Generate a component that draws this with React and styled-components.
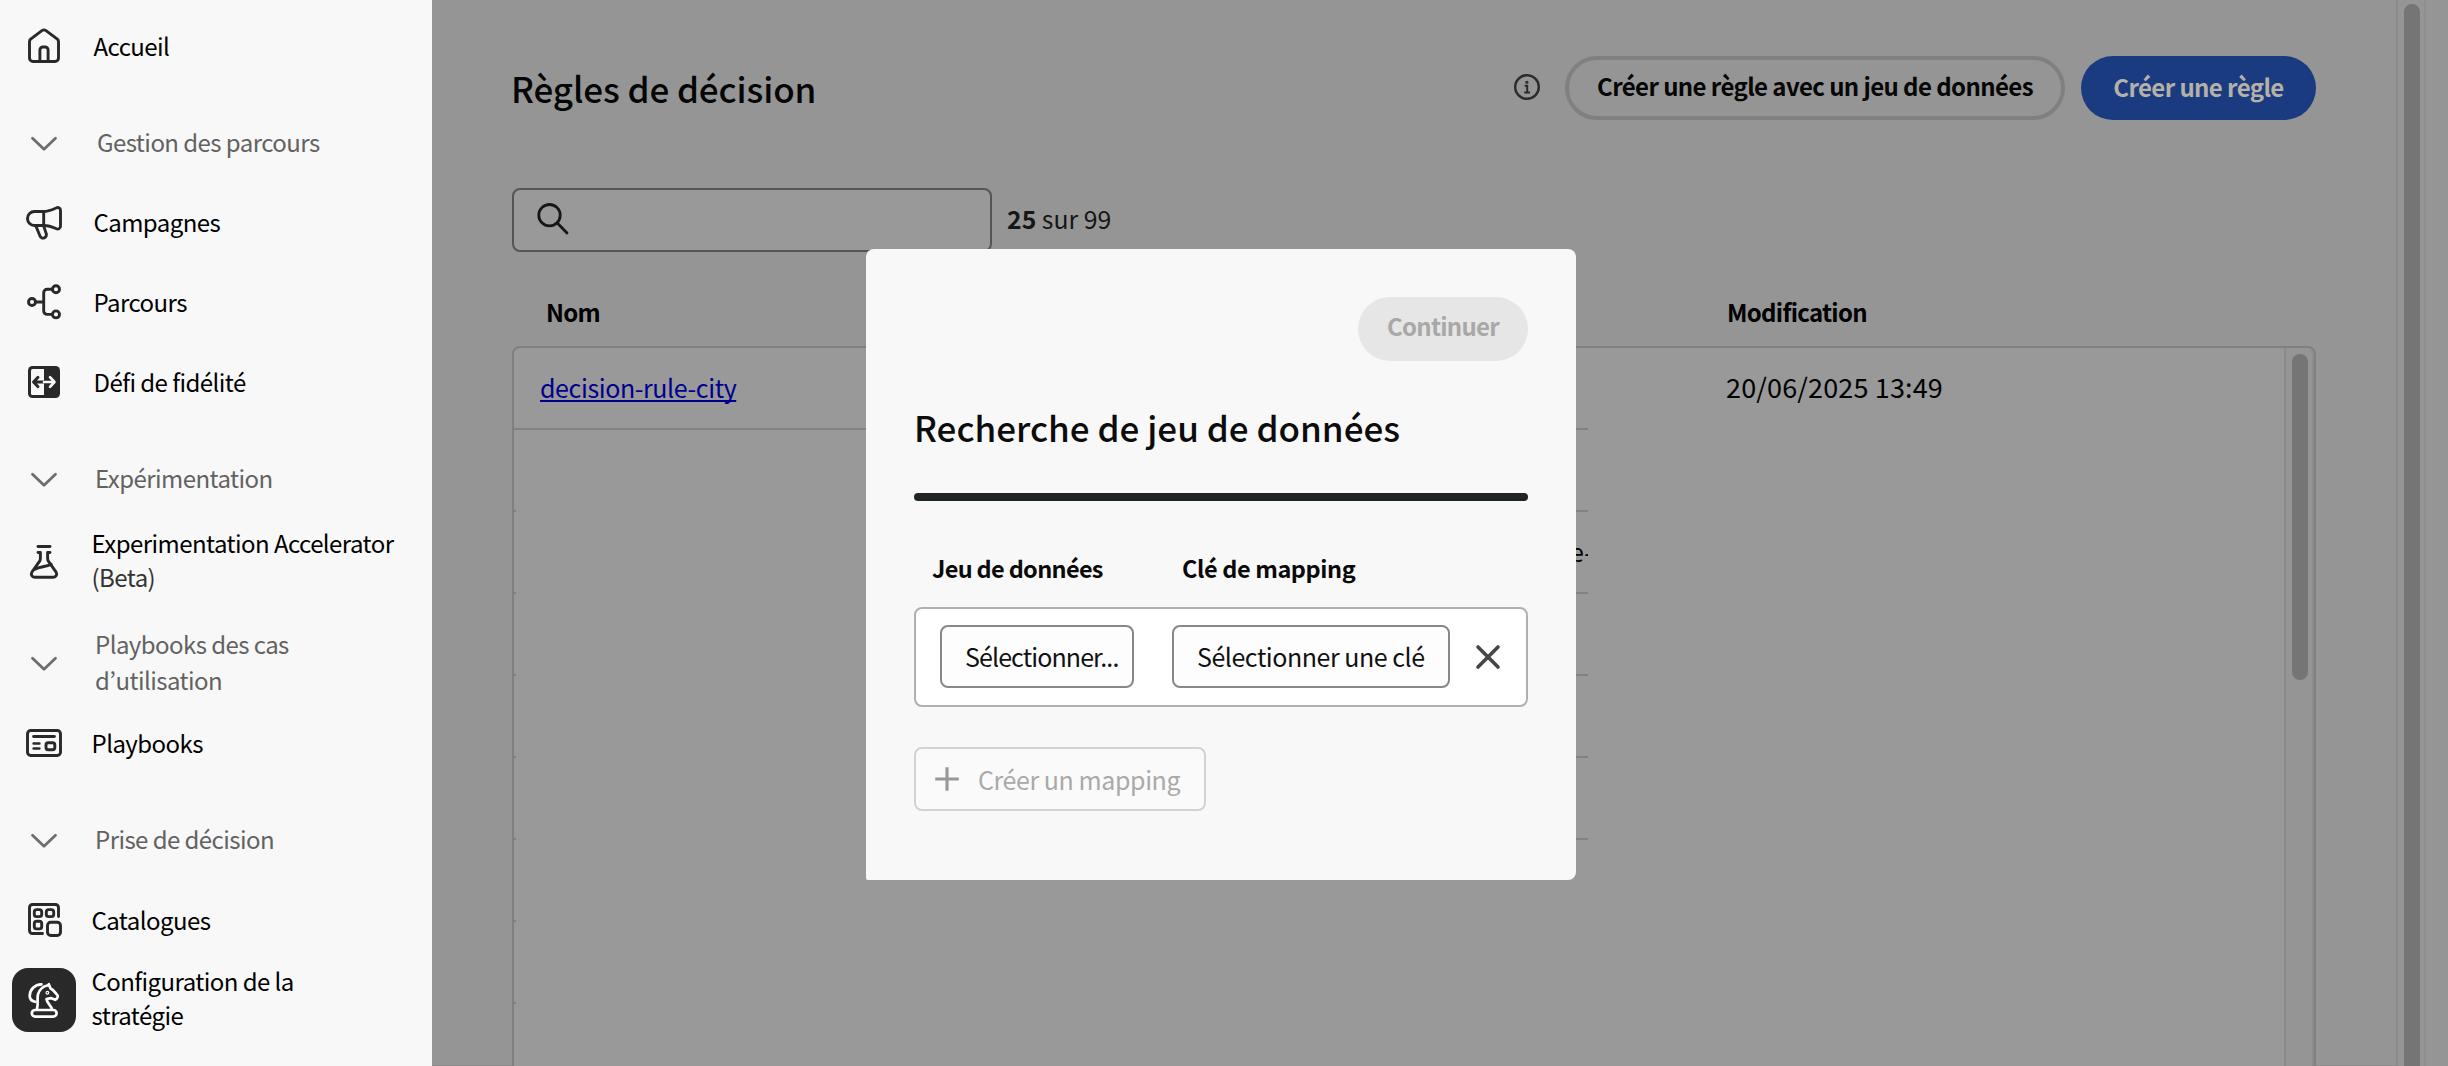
import React from "react";
import styled, { createGlobalStyle } from "styled-components";

const GlobalStyle = createGlobalStyle`
  *, *::before, *::after { box-sizing: border-box; }
  html, body { margin: 0; padding: 0; overflow: hidden; }
  body { font-family: "Noto Sans CJK KR", "Noto Sans", sans-serif; }
  button { font-family: inherit; margin: 0; }
`;

/* ---------- shell ---------- */

const Page = styled.div`
  position: relative;
  display: flex;
  width: 2448px;
  height: 1066px;
  overflow: hidden;
  background: #959595;
`;

const Sidebar = styled.nav`
  flex: none;
  width: 432px;
  height: 100%;
  padding-top: 6px;
  background: #f8f8f8;
`;

const NavRow = styled.div`
  display: flex;
  align-items: center;
  height: ${(p) => p.$height || 80}px;
  margin-top: ${(p) => p.$gap || 0}px;
  padding-left: 12px;
`;

const IconSlot = styled.span`
  display: flex;
  flex: none;
  align-items: center;
  justify-content: center;
  width: 64px;
  height: 64px;
  margin-top: ${(p) => p.$drop || 0}px;
  border-radius: 16px;
  background: ${(p) => (p.$active ? "#292929" : "transparent")};
`;

const NavLabel = styled.span`
  margin-left: ${(p) => p.$indent}px;
  font-size: 24px;
  line-height: ${(p) => p.$leading || 34}px;
  letter-spacing: -0.56px;
  white-space: nowrap;
  color: ${(p) => (p.$group ? "#626262" : "#000")};
`;

const SoftText = styled.span`
  color: #333;
`;

const Main = styled.main`
  flex: none;
  display: flex;
  flex-direction: column;
  width: 1964px;
  height: 100%;
  padding: 56px 80px 0;
  border-bottom: 1px solid #8c8c8c;
`;

/* ---------- header ---------- */

const Header = styled.header`
  display: flex;
  flex: none;
  align-items: center;
  justify-content: space-between;
  height: 64px;
`;

const PageTitle = styled.h1`
  margin: 0 0 0 -1px;
  font-size: 35px;
  font-weight: 500;
  line-height: 44px;
  letter-spacing: -0.1px;
  color: #050505;
`;

const Actions = styled.div`
  display: flex;
  align-items: center;
`;

const InfoButton = styled.span`
  display: flex;
  margin: -2px 25px 0 0;
`;

const PillButton = styled.button`
  display: flex;
  align-items: center;
  justify-content: center;
  width: ${(p) => p.$width}px;
  height: 64px;
  padding: 0 0 ${(p) => p.$lift}px;
  border: ${(p) => p.$border || "0"};
  border-radius: 32px;
  background: ${(p) => p.$fill || "transparent"};
  color: ${(p) => p.$color};
  font-size: 24px;
  font-weight: 700;
  letter-spacing: ${(p) => p.$track || -0.6}px;
  white-space: nowrap;
  & + & { margin-left: 16px; }
`;

/* ---------- search ---------- */

const SearchLine = styled.div`
  display: flex;
  flex: none;
  align-items: center;
  gap: 15px;
  margin-top: 68px;
`;

const SearchBox = styled.div`
  display: flex;
  align-items: center;
  width: 480px;
  height: 64px;
  padding: 0 0 3px 22px;
  border: 2px solid #555;
  border-radius: 8px;
  background: #999;
`;

const Count = styled.span`
  padding-bottom: 4px;
  font-size: 24.8px;
  line-height: 34px;
  color: #161616;
`;

/* ---------- table ---------- */

const TableHead = styled.div`
  display: grid;
  grid-template-columns: 1181px 1fr;
  flex: none;
  align-items: center;
  height: 94px;
  padding: 25px 0 0 34px;
`;

const HeadCell = styled.span`
  font-size: 24px;
  font-weight: 700;
  line-height: 34px;
  letter-spacing: -0.7px;
  color: #000;
`;

const Table = styled.section`
  display: flex;
  flex: none;
  height: 760px;
  border: 2px solid #808080;
  border-radius: 8px;
  background: #999;
`;

const Rows = styled.div`
  flex: 1;
`;

const FirstRow = styled.div`
  display: grid;
  grid-template-columns: 1074px 1fr;
  height: 82px;
`;

const NameCell = styled.div`
  display: flex;
  align-items: center;
  padding: 0 0 2px 26px;
  border-bottom: 2px solid #828282;
`;

const RuleLink = styled.a`
  font-size: 25px;
  line-height: 34px;
  letter-spacing: -0.4px;
  color: #00008f;
  text-decoration: underline;
  text-decoration-thickness: 2px;
  text-underline-offset: 2px;
  text-decoration-skip-ink: none;
`;

const DateCell = styled.div`
  display: flex;
  align-items: center;
  padding: 0 0 6px 138px;
  font-size: 27px;
  letter-spacing: 0.15px;
  color: #000;
`;

const Row = styled.div`
  display: flex;
  justify-content: space-between;
  width: 1074px;
  height: 82px;
`;

const RowEdge = styled.span`
  width: 2px;
  border-bottom: 2px solid #808080;
`;

const ClippedCell = styled.span`
  display: flex;
  align-items: center;
  justify-content: flex-start;
  width: 200px;
  padding: 0 0 2px 182px;
  overflow: hidden;
  border-bottom: ${(p) => (p.$plain ? "0" : "2px solid #828282")};
  font-size: 25px;
  line-height: 34px;
  white-space: nowrap;
  color: #000;
`;

const TableTrack = styled.div`
  display: flex;
  justify-content: center;
  width: 30px;
  padding-top: 6px;
  border-left: 2px solid #8a8a8a;
  border-right: 2px solid #8c8c8c;
  border-top-right-radius: 6px;
  background: #959595;
`;

const Thumb = styled.div`
  width: 16px;
  height: ${(p) => p.$height}px;
  margin-left: ${(p) => p.$shift || 0}px;
  border-radius: 8px;
  background: #757575;
`;

const PageTrack = styled.div`
  display: flex;
  justify-content: center;
  flex: none;
  width: 30px;
  height: 100%;
  padding-top: 4px;
  border-left: 2px solid #8a8a8a;
  border-right: 2px solid #8f8f8f;
`;

/* ---------- dialog ---------- */

const Dialog = styled.section`
  position: absolute;
  left: 866px;
  top: 249px;
  display: flex;
  flex-direction: column;
  width: 710px;
  height: 631px;
  padding: 48px;
  border-radius: 8px 8px 8px 2px;
  background: #f8f8f8;
`;

const DialogActions = styled.div`
  display: flex;
  justify-content: flex-end;
`;

const DialogTitle = styled.h2`
  margin: 44px 0 0;
  font-size: 35px;
  font-weight: 500;
  line-height: 44px;
  letter-spacing: 0;
  color: #0c0c0c;
`;

const Divider = styled.hr`
  width: 100%;
  height: 8px;
  margin: 44px 0 0;
  border: 0;
  border-radius: 4px;
  background: #202423;
`;

const FieldHeads = styled.div`
  display: grid;
  grid-template-columns: 250px 1fr;
  margin-top: 50px;
  padding-left: 18px;
`;

const FieldHead = styled.span`
  font-size: 23.5px;
  font-weight: 700;
  line-height: 34px;
  letter-spacing: ${(p) => p.$track}px;
  color: #0a0a0a;
`;

const MappingRow = styled.div`
  display: flex;
  align-items: center;
  height: 100px;
  margin-top: 22px;
  padding: 0 0 1px 24px;
  border: 2px solid #b0b0b0;
  border-radius: 8px;
  background: #fff;
`;

const Picker = styled.button`
  width: ${(p) => p.$width}px;
  height: 63px;
  margin-right: ${(p) => p.$after}px;
  padding: 0 0 1px 23px;
  border: 2px solid #878787;
  border-radius: 8px;
  background: #fdfdfd;
  color: #111;
  font-size: 25px;
  letter-spacing: ${(p) => p.$track}px;
  text-align: left;
  white-space: nowrap;
`;

const AddButton = styled.button`
  display: flex;
  align-items: center;
  gap: 18px;
  width: 292px;
  height: 64px;
  margin-top: 40px;
  padding: 0 0 1px 18px;
  border: 2px solid #d2d2d2;
  border-radius: 8px;
  background: #fafafa;
  color: #a9a9a9;
  font-size: 25px;
  letter-spacing: -0.42px;
  white-space: nowrap;
`;

/* ---------- icons ---------- */

const Glyph = ({ children, color = "#292929", width = 2.9 }) => (
  <svg width="40" height="40" viewBox="0 0 40 40" fill="none" stroke={color} strokeWidth={width} strokeLinecap="round" strokeLinejoin="round">
    {children}
  </svg>
);

const HomeIcon = () => (
  <Glyph>
    <path d="M5.5 15.6V32A3.5 3.5 0 0 0 9 35.5h22a3.5 3.5 0 0 0 3.5-3.5V15.6a3.5 3.5 0 0 0-1.5-2.8L22 4.6a3.6 3.6 0 0 0-4.1 0L7 12.8a3.5 3.5 0 0 0-1.5 2.8z" />
    <path d="M15.9 35V24a3 3 0 0 1 3-3h2.2a3 3 0 0 1 3 3v11" />
  </Glyph>
);

const ChevronIcon = () => (
  <Glyph color="#6e6e6e" width={2.8}>
    <path d="M8.5 14.3 20 25.3 31.5 14.3" />
  </Glyph>
);

const MegaphoneIcon = () => (
  <Glyph>
    <path d="M19.7 9.5H10.5a7 7 0 0 0 0 14h9.2z" />
    <path d="M19.7 9.5c5 0 9-2 12.8-3.7a2.8 2.8 0 0 1 4 2.6v15.9a2.8 2.8 0 0 1-4 2.5c-4-1.8-8-3.3-12.8-3.3" />
    <path d="M12 24.2l4 9.8a3.3 3.3 0 0 0 6.2-2.4l-2.4-7.2" />
  </Glyph>
);

const JourneyIcon = () => (
  <Glyph>
    <circle cx="8" cy="20" r="3.5" />
    <circle cx="32" cy="7.3" r="3.5" />
    <circle cx="32" cy="32.4" r="3.5" />
    <path d="M12 20h7.7M28 7.3h-4.8a3.5 3.5 0 0 0-3.5 3.5v18.1a3.5 3.5 0 0 0 3.5 3.5H28" />
  </Glyph>
);

const ChallengeIcon = () => (
  <Glyph>
    <rect x="4" y="4" width="32" height="32" rx="4.5" fill="#292929" stroke="none" />
    <path d="M20 7H8.6A1.6 1.6 0 0 0 7 8.6v22.8A1.6 1.6 0 0 0 8.6 33H20z" fill="#f8f8f8" stroke="none" />
    <path d="M20 20H10.5M14 15.200 9.500 20l4.500 4.800" />
    <path d="M20 20h10M26 15.200 30.500 20 26 24.800" stroke="#f8f8f8" strokeWidth="2.600" />
  </Glyph>
);

const FlaskIcon = () => (
  <Glyph>
    <path d="M14 4.500h12" />
    <path d="M14 10.500h2.400v5.700c0 1.300-.4 2.500-1.100 3.500L7.900 30.200c-1.500 2.300.1 5 2.700 5h18.800c2.600 0 4.200-2.700 2.700-5l-7.400-10.500c-.7-1-1.100-2.200-1.100-3.500v-5.700H26" />
    <path d="M11 27.200c5-2.900 10.500-2 16.200-5" />
  </Glyph>
);

const PlaybookIcon = () => (
  <Glyph>
    <rect x="3.500" y="7.500" width="33" height="25" rx="3.200" />
    <path d="M9.600 13.500h20.800" />
    <path d="M9.600 20.400h5.800M9.600 25.600h5.800" strokeWidth="2.500" />
    <rect x="22" y="19.800" width="8.800" height="7" rx="2.200" />
  </Glyph>
);

const CatalogIcon = () => (
  <Glyph>
    <path d="M18.500 33.500H8.500A3 3 0 0 1 5.500 30.500V7.500A3 3 0 0 1 8.500 4.500h23a3 3 0 0 1 3 3v9" />
    <rect x="10.300" y="9.600" width="7.400" height="7" rx="2.400" />
    <rect x="22.300" y="9.600" width="7.400" height="7" rx="2.400" />
    <rect x="10.300" y="21.300" width="7.400" height="7.600" rx="2.400" />
    <rect x="23.500" y="22.300" width="13" height="13.200" rx="3.200" />
  </Glyph>
);

const KnightIcon = () => (
  <Glyph color="#fff" width={2.7}>
    <rect x="7.800" y="30" width="24.800" height="6.600" rx="3.300" />
    <path d="M24.800 4.200l1.800 4.300c3.700 1.700 4.400 4.400 6.900 6.700.9 1.300-.5 3.800-2.300 4.600l-4.400-1.700-4.300.9c.5 4.700 4.600 6 5.600 10.500" />
    <path d="M24.200 5.200c-3 .6-8.500 2.600-10.200 9.200-1.200 4.800.6 7.600-1 14.600" />
    <path d="M17.500 4.300C10.500 4.500 6 9.300 5.700 15.700c-.1 3.300 1.800 5.300 5.500 6.100" />
    <circle cx="23.400" cy="12.800" r=".6" />
  </Glyph>
);

const SearchIcon = () => (
  <svg width="34" height="34" viewBox="0 0 34 34" fill="none" stroke="#161616" strokeWidth="2.800" strokeLinecap="round">
    <circle cx="13.500" cy="13.200" r="10.700" />
    <path d="M21.300 21 31 31" />
  </svg>
);

const InfoIcon = () => (
  <svg width="26" height="26" viewBox="0 0 26 26" fill="none" stroke="#2b2b2b" strokeWidth="2.400">
    <circle cx="13" cy="13" r="11.800" />
    <path d="M10.600 11.800h2.600v6.400M10.200 18.400h5.800" strokeWidth="2" />
    <circle cx="12.900" cy="8.200" r="1.500" fill="#2b2b2b" stroke="none" />
  </svg>
);

const CloseIcon = () => (
  <svg width="26" height="26" viewBox="0 0 26 26" stroke="#464646" strokeWidth="3.600" strokeLinecap="round">
    <path d="M3 3l20 20M23 3L3 23" />
  </svg>
);

const PlusIcon = () => (
  <svg width="26" height="26" viewBox="0 0 26 26" stroke="#989898" strokeWidth="3.200">
    <path d="M13 1.200v23.600M1.200 13h23.600" />
  </svg>
);

const Group = ({ gap, height, leading, indent = 21, children }) => (
  <NavRow $gap={gap} $height={height}>
    <IconSlot $drop={3}>
      <ChevronIcon />
    </IconSlot>
    <NavLabel $group $indent={indent} $leading={leading}>
      {children}
    </NavLabel>
  </NavRow>
);

const Item = ({ icon, height, indent = 17.5, active, drop, children }) => (
  <NavRow $height={height}>
    <IconSlot $active={active} $drop={drop}>
      {icon}
    </IconSlot>
    <NavLabel $indent={indent}>{children}</NavLabel>
  </NavRow>
);

export default function App() {
  return (
    <Page>
      <GlobalStyle />
      <Sidebar>
        <Item icon={<HomeIcon />}>Accueil</Item>
        <Group gap={16}>Gestion des parcours</Group>
        <Item icon={<MegaphoneIcon />}>Campagnes</Item>
        <Item icon={<JourneyIcon />}>Parcours</Item>
        <Item icon={<ChallengeIcon />}>Défi de fidélité</Item>
        <Group gap={16} indent={19}>Expérimentation</Group>
        <Item icon={<FlaskIcon />} height={84} indent={15.5} drop={3}>
          Experimentation Accelerator
          <br />
          <SoftText>(Beta)</SoftText>
        </Item>
        <Group height={120} leading={36} indent={19}>
          Playbooks des cas
          <br />
          d’utilisation
        </Group>
        <Item icon={<PlaybookIcon />} height={42} indent={15.5}>Playbooks</Item>
        <Group gap={35} indent={19}>Prise de décision</Group>
        <Item icon={<CatalogIcon />} height={82} indent={15.5}>Catalogues</Item>
        <Item icon={<KnightIcon />} height={74} indent={15.5} active drop={3}>
          Configuration de la
          <br />
          stratégie
        </Item>
      </Sidebar>

      <Main>
        <Header>
          <PageTitle>Règles de décision</PageTitle>
          <Actions>
            <InfoButton>
              <InfoIcon />
            </InfoButton>
            <PillButton $width={500} $lift={6} $border="4px solid #808080" $color="#060606">
              Créer une règle avec un jeu de données
            </PillButton>
            <PillButton $width={235} $lift={4} $fill="#1b3b81" $color="#b5b1a8">
              Créer une règle
            </PillButton>
          </Actions>
        </Header>

        <SearchLine>
          <SearchBox>
            <SearchIcon />
          </SearchBox>
          <Count>
            <b>25</b> sur 99
          </Count>
        </SearchLine>

        <TableHead>
          <HeadCell>Nom</HeadCell>
          <HeadCell>Modification</HeadCell>
        </TableHead>

        <Table>
          <Rows>
            <FirstRow>
              <NameCell>
                <RuleLink>decision-rule-city</RuleLink>
              </NameCell>
              <DateCell>20/06/2025 13:49</DateCell>
            </FirstRow>
            {["", "e-", "", "", "", null, null].map((text, i) => (
              <Row key={i}>
                <RowEdge />
                <ClippedCell $plain={text === null}>{text}</ClippedCell>
              </Row>
            ))}
          </Rows>
          <TableTrack>
            <Thumb $height={326} $shift={2} />
          </TableTrack>
        </Table>
      </Main>
      <PageTrack>
        <Thumb $height={1100} $shift={2} />
      </PageTrack>

      <Dialog>
        <DialogActions>
          <PillButton $width={170} $lift={8} $fill="#e6e6e6" $color="#a8a8a8" $track={-0.75}>
            Continuer
          </PillButton>
        </DialogActions>
        <DialogTitle>Recherche de jeu de données</DialogTitle>
        <Divider />
        <FieldHeads>
          <FieldHead $track={-0.68}>Jeu de données</FieldHead>
          <FieldHead $track={-0.4}>Clé de mapping</FieldHead>
        </FieldHeads>
        <MappingRow>
          <Picker $width={194} $after={38} $track={-0.9}>
            Sélectionner...
          </Picker>
          <Picker $width={278} $after={25} $track={-0.46}>
            Sélectionner une clé
          </Picker>
          <CloseIcon />
        </MappingRow>
        <AddButton>
          <PlusIcon />
          Créer un mapping
        </AddButton>
      </Dialog>
    </Page>
  );
}
